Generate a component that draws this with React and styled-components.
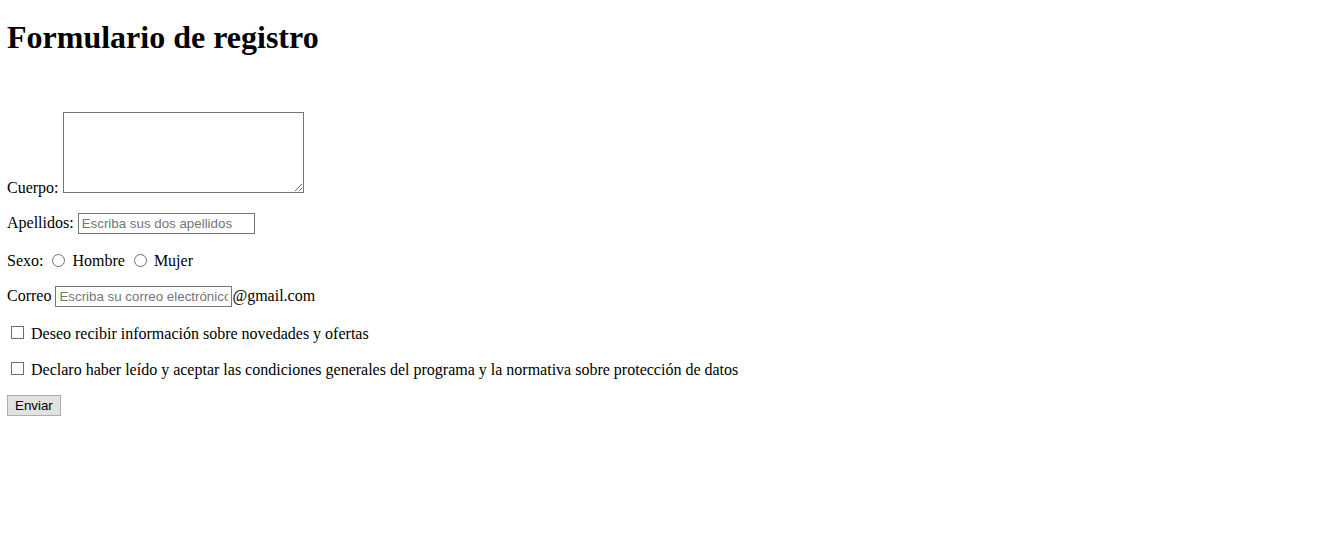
import React from "react";
import styled, { createGlobalStyle } from "styled-components";

const GlobalStyle = createGlobalStyle`
  body {
    margin: 8px 7px;
    font-family: "Liberation Serif", "Times New Roman", serif;
    font-size: 16px;
    color: #000;
    background: #fff;
  }
`;

// form title
const Title = styled.h1`
  font-size: 32px;
  font-weight: bold;
  margin: 11px 0 56px;
`;

const Form = styled.form`
  margin: 0;
`;

// one line of the form
const Row = styled.p`
  margin: 16px 0;
  &:first-child {
    margin-top: 0;
  }
`;

const BodyArea = styled.textarea`
  box-sizing: border-box;
  width: 241px;
  height: 81px;
  margin: 0;
  border: 1px solid #767676;
  font-family: "Liberation Mono", monospace;
  font-size: 13px;
  vertical-align: baseline;
`;

const TextField = styled.input`
  box-sizing: border-box;
  width: 177px;
  height: 21px;
  margin: 0;
  padding: 1px 3px;
  border: 1px solid #767676;
  font-family: "Liberation Sans", Arial, sans-serif;
  font-size: 13.33px;
  &::placeholder {
    color: #757575;
  }
`;

const Radio = styled.input.attrs({ type: "radio" })`
  appearance: none;
  box-sizing: border-box;
  width: 13px;
  height: 13px;
  margin: 4px 3px 0 5px;
  border: 1px solid #6e6e6e;
  border-radius: 50%;
  background: #fff;
  vertical-align: -1px;
  &:checked {
    background: radial-gradient(circle, #000 0 3px, #fff 3.5px);
  }
`;

const Check = styled.input.attrs({ type: "checkbox" })`
  appearance: none;
  box-sizing: border-box;
  width: 13px;
  height: 13px;
  margin: 3px 3px 0 4px;
  border: 1px solid #6e6e6e;
  border-radius: 0;
  background: #fff;
  vertical-align: 0;
  &:checked {
    background: #0075ff;
  }
`;

const SendButton = styled.button`
  font-family: "Liberation Sans", Arial, sans-serif;
  font-size: 13.33px;
  height: 21px;
  padding: 1px 7px;
  margin: 0;
  background: #e1e1e1;
  border: 1px solid #adadad;
  border-radius: 0;
  color: #000;
`;

function App() {
  return (
    <>
      <GlobalStyle />
      <Title>Formulario de registro</Title>
      <Form onSubmit={(e) => e.preventDefault()}>
        <Row>
          Cuerpo: <BodyArea name="cuerpo" />
        </Row>
        <Row>
          Apellidos: <TextField type="text" placeholder="Escriba sus dos apellidos" />
        </Row>
        <Row>
          Sexo: <Radio name="sexo" value="h" /> Hombre{" "}
          <Radio name="sexo" value="m" /> Mujer
        </Row>
        <Row>
          Correo <TextField type="text" placeholder="Escriba su correo electrónico" />@gmail.com
        </Row>
        <Row>
          <Check /> Deseo recibir información sobre novedades y ofertas
        </Row>
        <Row>
          <Check /> Declaro haber leído y aceptar las condiciones generales del programa y la normativa sobre protección de datos
        </Row>
        <SendButton type="submit">Enviar</SendButton>
      </Form>
    </>
  );
}

export default App;
